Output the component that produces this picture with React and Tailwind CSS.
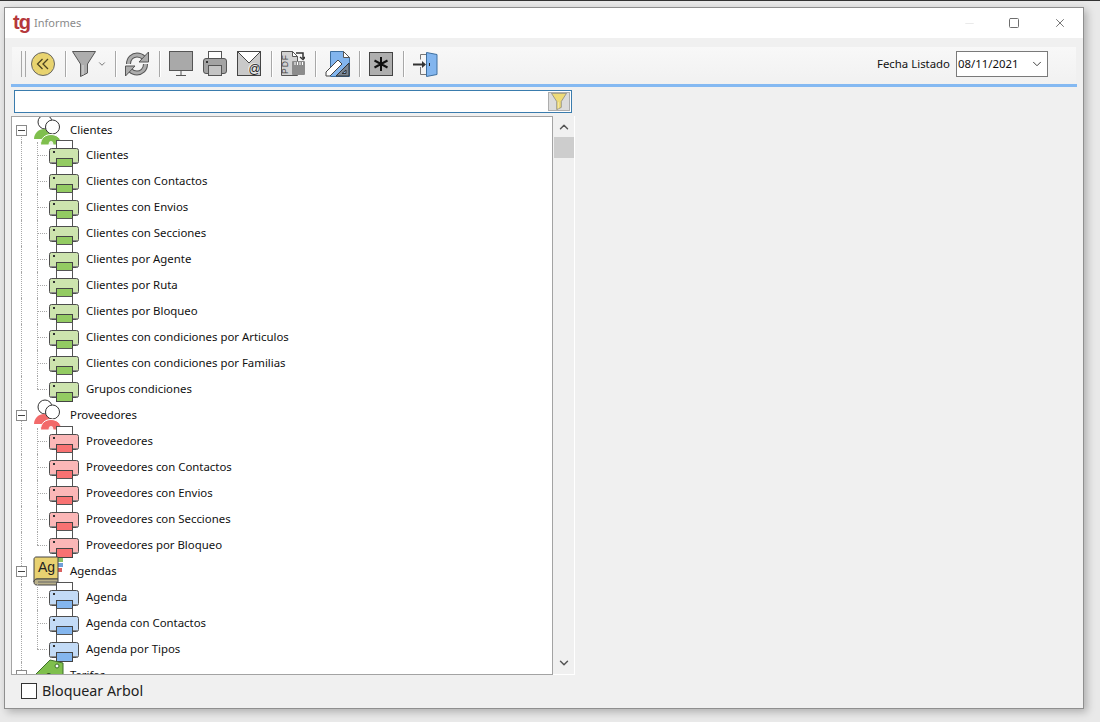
import { Minus, Square, X, ChevronDown, ChevronUp } from "lucide-react";

const GREEN = { body: "#cde4ae", tray: "#93cb62", person: "#7fbf4d" };
const RED = { body: "#fbb7b7", tray: "#f87272", person: "#f26a6a" };
const BLUE = { body: "#c3dbf6", tray: "#84b6ee", person: "#84b6ee" };

const groups = [
  {
    label: "Clientes",
    icon: "clientes",
    color: GREEN,
    items: [
      "Clientes",
      "Clientes con Contactos",
      "Clientes con Envios",
      "Clientes con Secciones",
      "Clientes por Agente",
      "Clientes por Ruta",
      "Clientes por Bloqueo",
      "Clientes con condiciones por Articulos",
      "Clientes con condiciones por Familias",
      "Grupos condiciones",
    ],
  },
  {
    label: "Proveedores",
    icon: "proveedores",
    color: RED,
    items: [
      "Proveedores",
      "Proveedores con Contactos",
      "Proveedores con Envios",
      "Proveedores con Secciones",
      "Proveedores por Bloqueo",
    ],
  },
  {
    label: "Agendas",
    icon: "agendas",
    color: BLUE,
    items: ["Agenda", "Agenda con Contactos", "Agenda por Tipos"],
  },
  { label: "Tarifas", icon: "tarifas", color: GREEN, items: [] },
];

function PrinterIcon({ color }) {
  return (
    <svg width="32" height="32" viewBox="0 0 32 32" className="shrink-0 relative">
      <rect x="8.5" y="1.5" width="16" height="10" fill="#fff" stroke="#555" />
      <rect x="1.5" y="9.5" width="29" height="15" rx="2" fill={color.body} stroke="#4d4d4d" />
      <rect x="5" y="12" width="2" height="2" fill="#333" />
      <path d="M2.5 23.5h27" stroke="#8a8a8a" />
      <rect x="8.5" y="19.5" width="16" height="9" fill={color.tray} stroke="#444" />
    </svg>
  );
}

function PeopleIcon({ color }) {
  return (
    <svg width="32" height="32" viewBox="0 0 32 32" className="shrink-0 relative">
      <circle cx="13" cy="8" r="7" fill="#fff" stroke="#333" />
      <path d="M2 25c0-6 5-10 10-10s10 4 10 10z" fill={color.person} />
      <circle cx="20.500" cy="13" r="7" fill="#fff" stroke="#333" />
      <path d="M8.500 31c0-7 5-10.500 10.500-10.500S29.500 24 29.500 31z" fill={color.person} stroke="#fff" />
      <path d="M16.500 31c0-2.500 1-4 2.500-4s2.500 1.500 2.500 4z" fill="#fff" fillOpacity=".85" />
    </svg>
  );
}

function BookIcon() {
  return (
    <svg width="32" height="32" viewBox="0 0 32 32" className="shrink-0 relative">
      <rect x="26" y="3" width="5" height="4" fill="#8cc063" />
      <rect x="26" y="8" width="5" height="4" fill="#6f9fd8" />
      <rect x="26" y="13" width="4" height="4" fill="#d86060" />
      <path d="M2 27V4c0-1 1-2 2-2h22v22H5c-2 0-3 1.500-3 3z" fill="#e8d171" stroke="#444" />
      <path d="M2 27c0 2 1 3 3 3h21v-6H5c-2 0-3 1.500-3 3z" fill="#b9b08a" stroke="#444" />
      <path d="M6 27h20" stroke="#666" />
      <text x="6" y="17" fontSize="14" fill="#222" fontFamily="Liberation Sans, sans-serif">Ag</text>
    </svg>
  );
}

function TagIcon() {
  return (
    <svg width="32" height="32" viewBox="0 0 32 32" className="shrink-0 relative">
      <path d="M3 16 18 1l13 3v12L15 32z" fill="#7fbf4d" stroke="#3f6f2a" />
      <circle cx="25" cy="7" r="2" fill="#fff" stroke="#3f6f2a" />
      <text x="13" y="22" fontSize="11" fill="#24491a" fontFamily="Liberation Sans, sans-serif">€</text>
    </svg>
  );
}

function GroupIcon({ group }) {
  if (group.icon === "agendas") return <BookIcon />;
  if (group.icon === "tarifas") return <TagIcon />;
  return <PeopleIcon color={group.color} />;
}

function GroupRow({ group, first }) {
  return (
    <div className={`relative flex items-center pl-[20px] ${first ? "h-[25px]" : "h-[26px]"}`}>
      <span className={`absolute left-[9px] bottom-0 border-l border-dotted border-[#a8a8a8] ${first ? "top-[12px]" : "top-0"}`} />
      <span className="absolute left-[4px] top-[8px] w-[11px] h-[11px] bg-white border border-[#8a8a8a] flex items-center justify-center z-10">
        <span className="w-[7px] h-px bg-[#444]" />
      </span>
      <GroupIcon group={group} />
      <span className="ml-[6px]">{group.label}</span>
    </div>
  );
}

function ItemRow({ label, color, last }) {
  return (
    <div className="relative flex items-center h-[26px] pl-[36px]">
      <span className="absolute left-[9px] top-0 bottom-0 border-l border-dotted border-[#a8a8a8]" />
      <span className={`absolute left-[25px] top-0 border-l border-dotted border-[#a8a8a8] ${last ? "h-[13px]" : "h-[26px]"}`} />
      <span className="absolute left-[25px] top-[13px] w-[10px] border-t border-dotted border-[#a8a8a8]" />
      <PrinterIcon color={color} />
      <span className="ml-[6px]">{label}</span>
    </div>
  );
}

function ToolSep({ left = 10, right = 8 }) {
  return (
    <span
      className="w-[2px] h-[26px] border-l border-[#a8a8a8] border-r-white border-r"
      style={{ marginLeft: left, marginRight: right }}
    />
  );
}

function FunnelIcon({ fill = "#adadad", stroke = "#555", w = 24, h = 26 }) {
  return (
    <svg width={w} height={h} viewBox="0 0 24 26" className="shrink-0">
      <path d="M.5.500h23L15.500 13v9l-7 3.500V13z" fill={fill} stroke={stroke} />
      <path d="M11 14v10" stroke="#fff" strokeOpacity=".6" />
    </svg>
  );
}

function RefreshIcon() {
  const arc1 = "M3.500 13C3.500 7 8 4 12 4c3 0 5 1 7 3";
  const arc2 = "M20.500 13c0 6-4.500 9-8.500 9-3 0-5-1-7-3";
  return (
    <svg width="24" height="26" viewBox="0 0 24 26" className="shrink-0">
      <path d={arc1} fill="none" stroke="#555" strokeWidth="5" />
      <path d={arc1} fill="none" stroke="#adadad" strokeWidth="3" />
      <path d="M23.500 1v10h-9.500z" fill="#adadad" stroke="#555" />
      <path d={arc2} fill="none" stroke="#555" strokeWidth="5" />
      <path d={arc2} fill="none" stroke="#adadad" strokeWidth="3" />
      <path d="M.5 25V15h9.500z" fill="#adadad" stroke="#555" />
    </svg>
  );
}

function MonitorIcon() {
  return (
    <svg width="24" height="26" viewBox="0 0 24 26" className="shrink-0">
      <rect x=".5" y=".5" width="23" height="19" fill="#a9a9a9" stroke="#555" />
      <path d="M12 20v5M7 24.500h10" stroke="#555" />
    </svg>
  );
}

function ToolPrinterIcon() {
  return (
    <svg width="24" height="26" viewBox="0 0 24 26" className="shrink-0">
      <rect x="5.500" y=".5" width="13" height="9" fill="#fff" stroke="#555" />
      <rect x=".5" y="7.500" width="23" height="15" rx="2.500" fill="#a3a3a3" stroke="#555" />
      <rect x="3" y="10" width="2" height="2" fill="#333" />
      <rect x="5.500" y="14.500" width="13" height="10" fill="#c4c4c4" stroke="#555" />
    </svg>
  );
}

function MailIcon() {
  return (
    <svg width="24" height="26" viewBox="0 0 24 26" className="shrink-0">
      <rect x=".5" y=".5" width="23" height="24" fill="#c9c9c9" stroke="#444" />
      <path d="M.5.500h23L12 12z" fill="#fff" stroke="#444" />
      <circle cx="17" cy="18" r="6" fill="#e4e4e4" />
      <text x="11.500" y="22" fontSize="12" fill="#222" fontFamily="Liberation Sans, sans-serif">@</text>
    </svg>
  );
}

function PdfIcon() {
  return (
    <svg width="24" height="26" viewBox="0 0 24 26" className="shrink-0">
      <path d="M.5.500h11l5 5v19H.5z" fill="#d2d2d2" stroke="#555" />
      <path d="M11.500.5v5h5z" fill="#fff" stroke="#555" />
      <text transform="translate(7 23) rotate(-90)" fontSize="8.500" letterSpacing="1" fill="#444" fontFamily="Liberation Sans, sans-serif">PDF</text>
      <rect x="11" y="10" width="13" height="14" rx="1" fill="#8c8c8c" />
      <path d="M14 11v3M16.500 11v3M19 11v3M21.500 11v3" stroke="#fff" />
      <path d="M15 2h7v5M19 6l3 2.500L24 6" fill="none" stroke="#333" strokeWidth="1.500" />
    </svg>
  );
}

function DesignIcon() {
  return (
    <svg width="25" height="26" viewBox="0 0 25 26" className="shrink-0">
      <path d="M5.500.5h13l6 6v19h-19z" fill="#82b5ee" stroke="#3e6f9f" />
      <path d="M18.500.5v6h6z" fill="#fff" stroke="#555" />
      <path d="M1 21 13 9l4 4L5 25H1z" fill="#fff" stroke="#444" />
      <path d="M24 12v13H11z" fill="#7b8794" stroke="#333" />
      <path d="M21 19v3.500h-4z" fill="#82b5ee" stroke="#333" />
    </svg>
  );
}

function AsteriskIcon() {
  return (
    <svg width="24" height="26" viewBox="0 0 24 26" className="shrink-0">
      <rect x=".5" y="1.500" width="23" height="23" fill="#aeaeae" stroke="#444" />
      <path d="M12 6v14M5.500 9.500l13 7M18.500 9.500l-13 7" stroke="#111" strokeWidth="2" />
    </svg>
  );
}

function DoorIcon() {
  return (
    <svg width="25" height="26" viewBox="0 0 25 26" className="shrink-0">
      <path d="M7.500 3.500h8M7.500 23.500h8M7.500 3.500v5M7.500 16v7.500" stroke="#777" fill="none" />
      <path d="M13.500 1.500l10.500 2v20l-10.500 2z" fill="#82b5ee" stroke="#3e6f9f" />
      <rect x="16" y="12" width="1" height="3" fill="#222" />
      <path d="M0 13.500h11" stroke="#333" strokeWidth="2" />
      <path d="M9 10l4 3.500L9 17z" fill="#333" />
    </svg>
  );
}

export default function App() {
  return (
    <div className="w-[1100px] h-[722px] overflow-hidden bg-[#e9e9e9] border-t border-[#333] text-[#111] font-['Noto_Sans',sans-serif] text-[11.4px]">
      <div className="ml-[4px] mt-[6px] w-[1080px] h-[702px] flex flex-col bg-[#f0f0f0] border border-[#8f8f8f] shadow-[3px_3px_8px_rgba(0,0,0,0.25)]">
        {/* title bar */}
        <div className="h-[30px] bg-white flex items-center shrink-0">
          <span className="ml-[8px] w-[21px] text-[20px] leading-none font-bold text-[#b5383c] font-['Liberation_Sans',sans-serif] tracking-[-1px] -mt-[3px]">tg</span>
          <span className="text-[#8a8a8a] text-[11px]">Informes</span>
          <div className="ml-auto flex items-center">
            <Minus size={13} strokeWidth={1} className="text-[#d8d8d8] mr-[32px]" />
            <Square size={12} strokeWidth={1} absoluteStrokeWidth className="text-[#6e6e6e] mr-[33px]" />
            <X size={14} strokeWidth={1} absoluteStrokeWidth className="text-[#777] mr-[16px]" />
          </div>
        </div>

        {/* toolbar */}
        <div className="ml-[7px] mr-[7px] mt-[9px] h-[37px] shrink-0 flex items-center pl-[9px] pb-[3px] bg-gradient-to-b from-[#f8f8f8] to-[#f1f1f1]">
          <span className="w-[5px] h-[26px] border-x border-[#a8a8a8]" />
          <span className="ml-[5px] w-[24px] h-[24px] rounded-full bg-[#e8d36f] border border-[#666] flex items-center justify-center">
            <svg width="14" height="12" viewBox="0 0 14 12">
              <path d="M6.500 1 1.500 6l5 5M12 1 7 6l5 5" fill="none" stroke="#4d4420" strokeWidth="1.300" />
            </svg>
          </span>
          <ToolSep right={5} />
          <FunnelIcon />
          <ChevronDown size={10} strokeWidth={1} absoluteStrokeWidth className="ml-[1px] text-[#777]" />
          <ToolSep left={8} />
          <RefreshIcon />
          <ToolSep />
          <MonitorIcon />
          <span className="w-[10px]" />
          <ToolPrinterIcon />
          <span className="w-[10px]" />
          <MailIcon />
          <ToolSep />
          <PdfIcon />
          <ToolSep />
          <DesignIcon />
          <ToolSep left={9} />
          <AsteriskIcon />
          <ToolSep />
          <DoorIcon />
          <span className="ml-auto">Fecha Listado</span>
          <div className="ml-[6px] mr-[28px] w-[92px] h-[26px] bg-white border border-[#7a7a7a] flex items-center pl-[1px]">
            <span>08/11/2021</span>
            <ChevronDown size={14} strokeWidth={1} absoluteStrokeWidth className="ml-auto mr-[3px] text-[#444]" />
          </div>
        </div>

        {/* blue rule */}
        <div className="ml-[6px] mr-[6px] h-[3px] shrink-0 bg-[#84b9f2]" />

        {/* search */}
        <div className="ml-[9px] mt-[3px] w-[558px] h-[23px] shrink-0 bg-white border border-[#3a7cad] flex items-center justify-end pr-[1px]">
          <button className="w-[22px] h-[19px] bg-[#dcdcdc] border border-[#adadad] flex items-center justify-center">
            <FunnelIcon fill="#eedb78" stroke="#777" w={16} h={17} />
          </button>
        </div>

        {/* tree + scrollbar */}
        <div className="ml-[6px] mt-[3px] flex h-[559px] w-[564px] shrink-0">
          <div className="w-[542px] bg-white border-l border-t border-r border-b border-[#a3a3a3] overflow-hidden">
            {groups.map((g, gi) => (
              <div key={g.label}>
                <GroupRow group={g} first={gi === 0} />
                {g.items.map((label, i) => (
                  <ItemRow key={label} label={label} color={g.color} last={i === g.items.length - 1} />
                ))}
              </div>
            ))}
          </div>
          <div className="w-[22px] bg-[#f0f0f0] border-r border-b border-white flex flex-col items-center">
            <ChevronUp size={14} strokeWidth={2.5} className="mt-[4px] text-[#555]" />
            <div className="mt-[3px] w-[20px] h-[21px] bg-[#cdcdcd]" />
            <ChevronDown size={14} strokeWidth={2.5} className="mt-auto mb-[4px] text-[#555]" />
          </div>
        </div>

        {/* footer */}
        <div className="ml-[16px] mt-[5px] flex items-center">
          <span className="w-[16px] h-[16px] bg-white border border-[#333]" />
          <span className="ml-[5px] text-[14.3px] text-[#222]">Bloquear Arbol</span>
        </div>
      </div>
    </div>
  );
}
